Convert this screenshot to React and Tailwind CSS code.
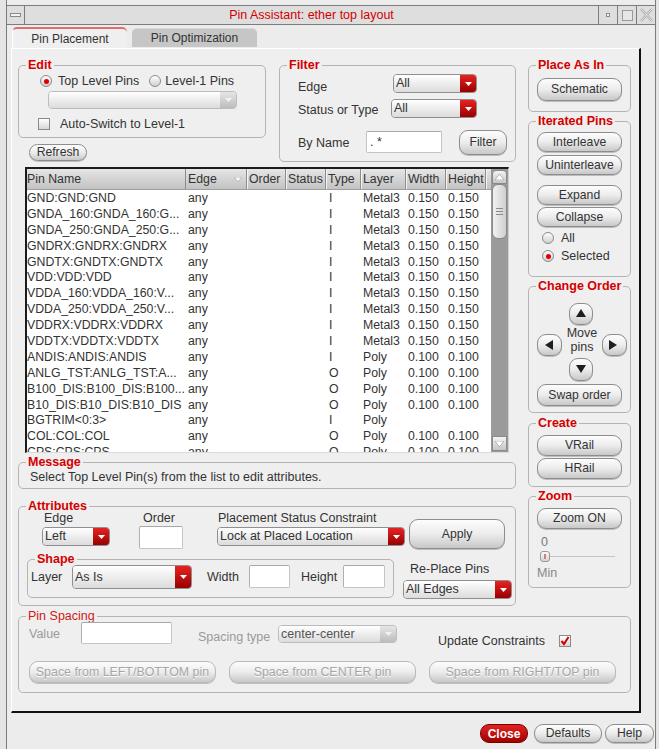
import React from 'react';

const rows = [
  ['GND:GND:GND', 'any', 'I', 'Metal3', '0.150', '0.150'],
  ['GNDA_160:GNDA_160:G...', 'any', 'I', 'Metal3', '0.150', '0.150'],
  ['GNDA_250:GNDA_250:G...', 'any', 'I', 'Metal3', '0.150', '0.150'],
  ['GNDRX:GNDRX:GNDRX', 'any', 'I', 'Metal3', '0.150', '0.150'],
  ['GNDTX:GNDTX:GNDTX', 'any', 'I', 'Metal3', '0.150', '0.150'],
  ['VDD:VDD:VDD', 'any', 'I', 'Metal3', '0.150', '0.150'],
  ['VDDA_160:VDDA_160:V...', 'any', 'I', 'Metal3', '0.150', '0.150'],
  ['VDDA_250:VDDA_250:V...', 'any', 'I', 'Metal3', '0.150', '0.150'],
  ['VDDRX:VDDRX:VDDRX', 'any', 'I', 'Metal3', '0.150', '0.150'],
  ['VDDTX:VDDTX:VDDTX', 'any', 'I', 'Metal3', '0.150', '0.150'],
  ['ANDIS:ANDIS:ANDIS', 'any', 'I', 'Poly', '0.100', '0.100'],
  ['ANLG_TST:ANLG_TST:A...', 'any', 'O', 'Poly', '0.100', '0.100'],
  ['B100_DIS:B100_DIS:B100...', 'any', 'O', 'Poly', '0.100', '0.100'],
  ['B10_DIS:B10_DIS:B10_DIS', 'any', 'O', 'Poly', '0.100', '0.100'],
  ['BGTRIM<0:3>', 'any', 'I', 'Poly', '', ''],
  ['COL:COL:COL', 'any', 'O', 'Poly', '0.100', '0.100'],
  ['CPS:CPS:CPS', 'any', 'O', 'Poly', '0.100', '0.100'],
];

const cols = 'grid grid-cols-[159px_61px_39px_40px_35px_45px_40px_40px]';

function Group({ title, className = '', dim = false, children }) {
  return (
    <fieldset className={`border border-[#b4b4b4] rounded-[5px] min-w-0 ${className}`}>
      <legend
        className={`ml-[7px] px-[2px] text-[12.5px] leading-[14px] ${
          dim ? 'font-normal text-[#d01818]' : 'font-bold text-[#d40000]'
        }`}
      >
        {title}
      </legend>
      {children}
    </fieldset>
  );
}

function Btn({ className = '', disabled = false, children }) {
  return (
    <div
      className={`flex items-center justify-center rounded-[9px] border bg-linear-to-b from-[#fdfdfd] via-[#ececec] to-[#c8c8c8] shadow-[0_1px_0_#bdbdbd] leading-none ${
        disabled
          ? 'border-[#b9b9b9] text-[#a6a6a6] text-[12.4px] [text-shadow:0_1px_0_#ffffff]'
          : 'border-[#8d8d8d] text-[#333] text-[12.2px]'
      } ${className}`}
    >
      {children}
    </div>
  );
}

function Select({ value, className = '', disabled = false }) {
  return (
    <div
      className={`flex items-stretch rounded-[4px] border overflow-hidden ${
        disabled ? 'border-[#bcbcbc]' : 'border-[#8f8f8f]'
      } ${className}`}
    >
      <div
        className={`flex-1 flex items-center pl-[2px] bg-linear-to-b from-[#ffffff] to-[#dcdcdc] ${
          disabled ? 'text-[#555]' : 'text-[#333]'
        }`}
      >
        {value}
      </div>
      <div
        className={`w-[16px] flex items-center justify-center ${
          disabled ? 'bg-linear-to-b from-[#e6e6e6] to-[#bcbcbc]' : 'bg-linear-to-b from-[#e82222] to-[#980000]'
        }`}
      >
        <svg width="7" height="4" viewBox="0 0 7 4">
          <polygon points="0,0 7,0 3.5,4" fill={disabled ? '#f2f2f2' : '#ffffff'} />
        </svg>
      </div>
    </div>
  );
}

function Input({ className = '' }) {
  return <div className={`bg-white border border-[#c4c4c4] border-t-[#a8a8a8] border-l-[#b0b0b0] rounded-[2px] ${className}`} />;
}

function Radio({ on = false }) {
  return (
    <div className="w-[12px] h-[12px] rounded-full border border-[#8a8a8a] bg-linear-to-b from-[#ffffff] to-[#cfcfcf] flex items-center justify-center shrink-0">
      {on && <div className="w-[5px] h-[5px] rounded-full bg-[#e00000]" />}
    </div>
  );
}

function Check({ on = false }) {
  return (
    <div className="w-[12px] h-[12px] border border-[#8a8a8a] bg-linear-to-b from-[#ffffff] to-[#d6d6d6] flex items-center justify-center shrink-0">
      {on && (
        <svg width="10" height="10" viewBox="0 0 10 10">
          <path d="M1.5 5 L4 8 L8.5 1" stroke="#d40000" strokeWidth="2" fill="none" />
        </svg>
      )}
    </div>
  );
}

function Arrow({ dir }) {
  const pts = {
    up: '0,8 5,0 10,8',
    down: '0,0 10,0 5,8',
    left: '8,0 8,10 0,5',
    right: '0,0 0,10 8,5',
  }[dir];
  return (
    <svg width="10" height="10" viewBox="0 0 10 10">
      <polygon points={pts} fill="#1e1e1e" />
    </svg>
  );
}

function HeadCell({ children, last = false, sort = false }) {
  return (
    <div
      className={`flex items-center pl-[2px] h-full ${last ? '' : 'border-r border-r-[#8c8c8c] shadow-[1px_0_0_#f4f4f4]'}`}
    >
      <span className="flex-1">{children}</span>
      {sort && (
        <svg width="8" height="5" viewBox="0 0 8 5" className="mr-[4px]">
          <polygon points="0,0 8,0 4,5" fill="#f6f6f6" stroke="#9a9a9a" strokeWidth="0.6" />
        </svg>
      )}
    </div>
  );
}

function PinTable() {
  return (
    <div className="ml-[7px] mt-[5px] w-[484px] h-[286px] flex bg-white border-t-2 border-l-2 border-r border-b border-t-[#1c1c1c] border-l-[#1c1c1c] border-r-[#cfcfcf] border-b-[#dadada] text-[12.3px] text-[#333]">
      <div className="flex-1 flex flex-col overflow-hidden">
        <div className="h-[21px] shrink-0 bg-linear-to-b from-[#e6e6e6] to-[#c2c2c2] border-b border-[#a0a0a0]">
          <div className={`${cols} h-full`}>
            <div className="flex items-center h-full border-r border-r-[#8c8c8c]">Pin Name</div>
            <HeadCell sort>Edge</HeadCell>
            <HeadCell>Order</HeadCell>
            <HeadCell>Status</HeadCell>
            <HeadCell>Type</HeadCell>
            <HeadCell>Layer</HeadCell>
            <HeadCell>Width</HeadCell>
            <HeadCell>Height</HeadCell>
          </div>
        </div>
        <div className="flex-1 overflow-hidden pt-[1px]">
          {rows.map((r) => (
            <div key={r[0]} className={`${cols} h-[15.9px] leading-[15.9px] whitespace-nowrap`}>
              <div className="overflow-hidden">{r[0]}</div>
              <div className="pl-[2px]">{r[1]}</div>
              <div />
              <div />
              <div className="pl-[3px]">{r[2]}</div>
              <div className="pl-[2px]">{r[3]}</div>
              <div className="pl-[2px]">{r[4]}</div>
              <div className="pl-[2px]">{r[5]}</div>
            </div>
          ))}
        </div>
      </div>
      <div className="w-[17px] shrink-0 flex flex-col bg-[#9a9a9a]">
        <div className="h-[14px] mx-[1px] mt-[1px] rounded-t-[4px] bg-linear-to-b from-[#f4f4f4] to-[#c6c6c6] border border-[#8a8a8a] flex items-center justify-center">
          <svg width="9" height="6" viewBox="0 0 9 6">
            <polygon points="0,6 4.5,0 9,6" fill="#ffffff" stroke="#9a9a9a" strokeWidth="0.7" />
          </svg>
        </div>
        <div className="h-[55px] mx-[1px] rounded-[6px] bg-linear-to-r from-[#f2f2f2] to-[#cfcfcf] border border-[#8a8a8a] flex flex-col items-center justify-center gap-[2px]">
          <div className="w-[7px] h-[1px] bg-[#8a8a8a]" />
          <div className="w-[7px] h-[1px] bg-[#8a8a8a]" />
          <div className="w-[7px] h-[1px] bg-[#8a8a8a]" />
        </div>
        <div className="flex-1" />
        <div className="h-[15px] mx-[1px] mb-[1px] bg-linear-to-b from-[#f4f4f4] to-[#c6c6c6] border border-[#8a8a8a] flex items-center justify-center">
          <svg width="9" height="6" viewBox="0 0 9 6">
            <polygon points="0,0 9,0 4.5,6" fill="#ffffff" stroke="#9a9a9a" strokeWidth="0.7" />
          </svg>
        </div>
      </div>
    </div>
  );
}

function LeftColumn() {
  return (
    <div className="w-[498px] shrink-0 flex flex-col">
      <div className="flex gap-[13px]">
        <div className="w-[248px] flex flex-col">
          <Group title="Edit" className="w-[248px] h-[80px]">
            <div className="mt-[2px] ml-[21px] h-[14px] flex items-center">
              <Radio on />
              <span className="ml-[6px]">Top Level Pins</span>
              <span className="ml-[10px]">
                <Radio />
              </span>
              <span className="ml-[4px]">Level-1 Pins</span>
            </div>
            <Select disabled value="" className="mt-[3px] ml-[29px] w-[189px] h-[18px]" />
            <div className="mt-[9px] ml-[19px] h-[12px] flex items-center">
              <Check />
              <span className="ml-[10px]">Auto-Switch to Level-1</span>
            </div>
          </Group>
          <Btn className="mt-[6px] ml-[11px] w-[58px] h-[17px]">Refresh</Btn>
        </div>
        <Group title="Filter" className="w-[237px] h-[104px]">
          <div className="mt-[2px] flex items-start">
            <span className="ml-[18px] mt-[6px] w-[95px] leading-[14px]">Edge</span>
            <Select value="All" className="w-[84px] h-[19px]" />
          </div>
          <div className="mt-[5px] flex items-start">
            <span className="ml-[18px] mt-[4px] w-[93px] leading-[14px]">Status or Type</span>
            <Select value="All" className="w-[86px] h-[19px]" />
          </div>
          <div className="mt-[12px] flex items-start">
            <span className="ml-[18px] mt-[6px] w-[68px] leading-[14px]">By Name</span>
            <div className="mt-[1px] w-[76px] h-[22px] bg-white border border-[#c4c4c4] border-t-[#a8a8a8] rounded-[2px] flex items-center pl-[3px] leading-none">
              . *
            </div>
            <Btn className="ml-[17px] w-[48px] h-[25px]">Filter</Btn>
          </div>
        </Group>
      </div>

      <PinTable />

      <Group title="Message" className="mt-[2px] w-[498px] h-[34px]">
        <div className="mt-[1px] ml-[11px] leading-[14px]">Select Top Level Pin(s) from the list to edit attributes.</div>
      </Group>

      <Group title="Attributes" className="mt-[10px] w-[498px] h-[107px]">
        <div className="-mt-[2px] flex items-start">
          <div className="ml-[23px] w-[68px] flex flex-col">
            <span className="ml-[2px] leading-[14px]">Edge</span>
            <Select value="Left" className="mt-[2px] w-[68px] h-[19px]" />
          </div>
          <div className="ml-[29px] w-[44px] flex flex-col">
            <span className="ml-[4px] leading-[14px]">Order</span>
            <Input className="mt-[1px] w-[44px] h-[23px]" />
          </div>
          <div className="ml-[34px] w-[188px] flex flex-col">
            <span className="ml-[1px] leading-[14px] whitespace-nowrap">Placement Status Constraint</span>
            <Select value="Lock at Placed Location" className="mt-[2px] w-[188px] h-[19px]" />
          </div>
          <Btn className="ml-[4px] mt-[8px] w-[96px] h-[30px]">Apply</Btn>
        </div>
        <div className="mt-[3px] flex items-start">
          <Group title="Shape" className="ml-[8px] w-[367px] h-[46px]">
            <div className="-mt-[1px] flex items-start">
              <span className="ml-[3px] mt-[5px] w-[41px] leading-[14px]">Layer</span>
              <Select value="As Is" className="w-[120px] h-[24px]" />
              <span className="ml-[15px] mt-[5px] w-[42px] leading-[14px]">Width</span>
              <Input className="w-[41px] h-[23px]" />
              <span className="ml-[11px] mt-[5px] w-[42px] leading-[14px]">Height</span>
              <Input className="w-[42px] h-[23px]" />
            </div>
          </Group>
          <div className="ml-[9px] mt-[10px] w-[109px] flex flex-col">
            <span className="ml-[7px] leading-[14px] whitespace-nowrap">Re-Place Pins</span>
            <Select value="All Edges" className="mt-[4px] w-[109px] h-[19px]" />
          </div>
        </div>
      </Group>
    </div>
  );
}

function RightColumn() {
  return (
    <div className="w-[103px] shrink-0 flex flex-col">
      <Group title="Place As In" className="w-[103px] h-[54px] flex flex-col items-center">
        <Btn className="mt-[6px] w-[85px] h-[23px]">Schematic</Btn>
      </Group>
      <Group title="Iterated Pins" className="mt-[2px] w-[103px] h-[163px] flex flex-col items-center">
        <Btn className="mt-[4px] w-[85px] h-[20px]">Interleave</Btn>
        <Btn className="mt-[3px] w-[85px] h-[20px]">Uninterleave</Btn>
        <Btn className="mt-[10px] w-[85px] h-[20px]">Expand</Btn>
        <Btn className="mt-[2px] w-[85px] h-[20px]">Collapse</Btn>
        <div className="self-start mt-[4px] ml-[13px] h-[14px] flex items-center">
          <Radio />
          <span className="ml-[7px]">All</span>
        </div>
        <div className="self-start mt-[4px] ml-[13px] h-[14px] flex items-center">
          <Radio on />
          <span className="ml-[7px]">Selected</span>
        </div>
      </Group>
      <Group title="Change Order" className="mt-[2px] w-[103px] h-[134px] flex flex-col">
        <Btn className="mt-[10px] ml-[40px] w-[24px] h-[22px] rounded-[6px]">
          <Arrow dir="up" />
        </Btn>
        <div className="mt-[1px] ml-[8px] w-[90px] flex justify-between items-start">
          <Btn className="mt-[8px] w-[25px] h-[22px] rounded-[6px]">
            <Arrow dir="left" />
          </Btn>
          <div className="flex flex-col items-center leading-[14px]">
            <span>Move</span>
            <span>pins</span>
          </div>
          <Btn className="mt-[8px] w-[25px] h-[22px] rounded-[6px]">
            <Arrow dir="right" />
          </Btn>
        </div>
        <Btn className="mt-[2px] ml-[40px] w-[24px] h-[23px] rounded-[6px]">
          <Arrow dir="down" />
        </Btn>
        <Btn className="mt-[3px] ml-[8px] w-[85px] h-[22px]">Swap order</Btn>
      </Group>
      <Group title="Create" className="mt-[3px] w-[103px] h-[71px] flex flex-col items-center">
        <Btn className="mt-[5px] w-[85px] h-[21px]">VRail</Btn>
        <Btn className="mt-[2px] w-[85px] h-[21px]">HRail</Btn>
      </Group>
      <Group title="Zoom" className="mt-[2px] w-[103px] h-[99px] flex flex-col">
        <Btn className="mt-[5px] ml-[8px] w-[85px] h-[21px]">Zoom ON</Btn>
        <span className="mt-[6px] ml-[12px] leading-[14px] text-[#777]">0</span>
        <div className="mt-[2px] ml-[11px] w-[75px] h-[11px] flex items-center">
          <div className="w-[10px] h-[11px] rounded-[3px] border border-[#9a9a9a] bg-linear-to-b from-[#fafafa] to-[#d4d4d4] flex items-center justify-center">
            <div className="w-[2px] h-[5px] bg-[#d08080]" />
          </div>
          <div className="flex-1 h-[1px] bg-[#c4c4c4]" />
        </div>
        <span className="mt-[4px] ml-[8px] leading-[14px] text-[#888]">Min</span>
      </Group>
    </div>
  );
}

export default function App() {
  return (
    <div className="w-[659px] h-[749px] bg-[#e4e4e4] overflow-hidden font-['Liberation_Sans',Arial,sans-serif] text-[12.5px] text-[#333]">
      <div className="ml-[6px] w-[650px] h-[749px] border-x border-[#7c7c7c] bg-[#ececec] pt-[5px] flex flex-col">
        {/* title bar */}
        <div className="h-[20px] shrink-0 border-y border-[#7c7c7c] bg-[#dedede] flex">
          <div className="w-[18px] border-r border-[#7c7c7c] flex items-center justify-center">
            <div className="w-[11px] h-[4px] border border-[#8a8a8a] bg-[#f2f2f2]" />
          </div>
          <div className="flex-1 flex items-center justify-center text-[12.5px] text-[#d40000]">
            Pin Assistant: ether top layout
          </div>
          <div className="w-[19px] border-l border-[#7c7c7c] flex items-center justify-center">
            <div className="w-[4px] h-[4px] border border-[#8a8a8a] bg-[#f2f2f2]" />
          </div>
          <div className="w-[19px] border-l border-[#7c7c7c] flex items-center justify-center">
            <div className="w-[11px] h-[11px] border border-[#9a9a9a] bg-[#e6e6e6]" />
          </div>
          <div className="w-[19px] border-l border-[#7c7c7c] flex items-center justify-center">
            <svg width="13" height="14" viewBox="0 0 13 14">
              <path d="M1 1 L12 13 M12 1 L1 13" stroke="#a8a8a8" strokeWidth="2.4" fill="none" />
              <path d="M1 1 L12 13 M12 1 L1 13" stroke="#ececec" strokeWidth="1" fill="none" />
            </svg>
          </div>
        </div>

        {/* tabs */}
        <div className="h-[23px] shrink-0 pl-[5px] flex items-end gap-[5px] text-[12px]">
          <div className="w-[115px] h-[21px] rounded-t-[5px] border-t-2 border-t-[#e07070] border-l border-l-white bg-[#efefef] flex items-center justify-center text-[#333]">
            Pin Placement
          </div>
          <div className="w-[125px] h-[19px] mb-[1px] rounded-t-[5px] bg-[#c6c6c6] border-t border-t-[#d8d8d8] flex items-center justify-center text-[#333]">
            Pin Optimization
          </div>
        </div>

        {/* main panel */}
        <div className="ml-[4px] w-[630px] h-[665px] shrink-0 border-l border-t border-l-white border-t-white border-r-2 border-b-2 border-r-[#111] border-b-[#111] bg-[#efefef] pl-[6px] pt-[9px]">
          <div className="flex gap-[12px]">
            <LeftColumn />
            <RightColumn />
          </div>
          <Group title="Pin Spacing" dim className="mt-[3px] w-[613px] h-[84px]">
            <div className="-mt-[1px] flex items-start">
              <span className="ml-[10px] mt-[5px] w-[52px] leading-[14px] text-[#9a9a9a]">Value</span>
              <Input className="w-[91px] h-[22px]" />
              <span className="ml-[26px] mt-[8px] w-[80px] leading-[14px] text-[#9a9a9a] whitespace-nowrap">Spacing type</span>
              <Select disabled value="center-center" className="mt-[3px] w-[119px] h-[18px]" />
              <span className="ml-[41px] mt-[12px] w-[121px] leading-[14px] whitespace-nowrap">Update Constraints</span>
              <div className="mt-[13px]">
                <Check on />
              </div>
            </div>
            <div className="mt-[13px] ml-[10px] flex gap-[13px]">
              <Btn disabled className="w-[187px] h-[22px]">Space from LEFT/BOTTOM pin</Btn>
              <Btn disabled className="w-[187px] h-[22px]">Space from CENTER pin</Btn>
              <Btn disabled className="w-[187px] h-[22px]">Space from RIGHT/TOP pin</Btn>
            </div>
          </Group>
        </div>

        {/* bottom buttons */}
        <div className="mt-[11px] pr-[1px] flex justify-end">
          <div className="w-[48px] h-[19px] rounded-[9px] border border-[#7a0000] bg-linear-to-b from-[#e42222] to-[#a00000] flex items-center justify-center text-white font-bold text-[12px] leading-none">
            Close
          </div>
          <Btn className="ml-[6px] w-[68px] h-[19px]">Defaults</Btn>
          <Btn className="ml-[3px] w-[49px] h-[19px]">Help</Btn>
        </div>
      </div>
    </div>
  );
}
